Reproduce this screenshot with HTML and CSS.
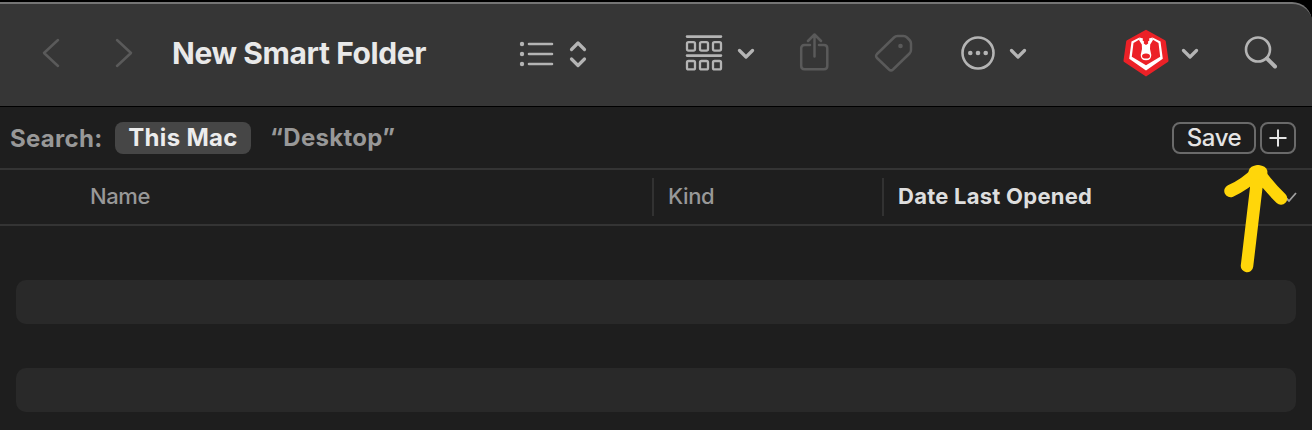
FILE: index.html
```
<!DOCTYPE html>
<html lang="en">
<head>
    <meta charset="UTF-8">
    <meta name="viewport" content="width=device-width, initial-scale=1.0">
    <title>New Smart Folder</title>
    <link rel="stylesheet" href="styles.css">
</head>
<body>
    <div class="window">
        <!-- Toolbar -->
        <div class="toolbar">
            <svg class="icon dim back" width="20" height="32" viewBox="0 0 20 32">
                <path d="M17 3L3 16L17 29"/>
            </svg>
            <svg class="icon dim forward" width="20" height="32" viewBox="0 0 20 32">
                <path d="M3 3L17 16L3 29"/>
            </svg>
            <h1 class="title">New Smart Folder</h1>

            <svg class="icon view" width="68" height="32" viewBox="0 0 68 32">
                <path d="M10 7H33M10 17H33M10 27H33"/>
                <g class="fill">
                    <circle cx="3" cy="7" r="2.2"/>
                    <circle cx="3" cy="17" r="2.2"/>
                    <circle cx="3" cy="27" r="2.2"/>
                </g>
                <path class="thick" d="M52.5 12.5L59 6L65.5 12.5M52.5 22L59 28.5L65.5 22"/>
            </svg>

            <svg class="icon group" width="38" height="38" viewBox="0 0 38 38">
                <path d="M2 2.6H36M2 21.6H36"/>
                <g class="cells">
                    <rect x="2" y="8.2" width="8" height="8.4" rx="1.5"/>
                    <rect x="15" y="8.2" width="8" height="8.4" rx="1.5"/>
                    <rect x="28" y="8.2" width="8" height="8.4" rx="1.5"/>
                    <rect x="2" y="27" width="8" height="8.4" rx="1.5"/>
                    <rect x="15" y="27" width="8" height="8.4" rx="1.5"/>
                    <rect x="28" y="27" width="8" height="8.4" rx="1.5"/>
                </g>
            </svg>
            <svg class="icon chevron" width="18" height="12" viewBox="0 0 18 12">
                <path class="thick" d="M2.5 3.5L9 10L15.5 3.5"/>
            </svg>

            <svg class="icon dim share" width="32" height="40" viewBox="0 0 32 40">
                <path d="M11 12H5.5Q2.2 12 2.2 15.3V33Q2.2 36.2 5.5 36.2H25Q28.3 36.2 28.3 33V15.3Q28.3 12 25 12H20"/>
                <path d="M15.5 23.5V2M9 8L15.5 1.5L22 8"/>
            </svg>
            <svg class="icon dim tag" width="40" height="40" viewBox="0 0 40 40">
                <path d="M20 4.5Q21.5 3 23.5 3H29.5Q31.5 3 33 4.5L35.5 7Q37 8.5 37 10.5V17Q37 19 35.5 20.5L19 36.5Q17 38.3 15 36.5L3 25Q1.2 23 3 21Z"/>
                <circle class="dot" cx="26.5" cy="13" r="2.3"/>
            </svg>

            <svg class="icon more" width="36" height="36" viewBox="0 0 36 36">
                <circle cx="18" cy="18" r="15.5"/>
                <g class="fill">
                    <circle cx="10.3" cy="18" r="2.3"/>
                    <circle cx="18" cy="18" r="2.3"/>
                    <circle cx="25.7" cy="18" r="2.3"/>
                </g>
            </svg>
            <svg class="icon chevron" width="18" height="12" viewBox="0 0 18 12">
                <path class="thick" d="M2.5 3.5L9 10L15.5 3.5"/>
            </svg>

            <svg class="bear" width="46" height="48" viewBox="0 0 46 48">
                <path class="badge" d="M23 0.7L42 11.2Q42.7 11.7 42.8 12.5L45.5 31.5Q45.6 32.5 44.8 33L23 47.5L1.2 33Q0.4 32.5 0.5 31.5L3.2 12.5Q3.3 11.7 4 11.2Z"/>
                <path class="face" d="M16.5 8.5L8.5 12.5L6.2 29.8L23 41.5L39.8 29.8L37.5 12.5L29.5 8.5L30 10.8L35.5 14L37.2 27.8L23 36.3L8.8 27.8L10.5 14L16 10.8Z"/>
                <path class="head" d="M16.5 8.5L20 9.5L19.6 11.5L21 12.5L20.8 14.500L23 16L25.2 14.5L25 12.5L26.4 11.5L26 9.5L29.5 8.5L30 11L27.2 15.5L27 20L28.300 26Q28.300 31.3 23 31.3Q17.700 31.3 17.700 26L19 20L18.800 15.500L16 11Z"/>
                <ellipse class="nose" cx="23" cy="27" rx="4" ry="2.6"/>
            </svg>
            <svg class="icon chevron" width="18" height="12" viewBox="0 0 18 12">
                <path class="thick" d="M2.5 3.5L9 10L15.5 3.5"/>
            </svg>

            <svg class="icon search" width="36" height="36" viewBox="0 0 36 36">
                <circle cx="15" cy="14.5" r="12"/>
                <path class="handle" d="M24 23.5L32 31.5"/>
            </svg>
        </div>

        <!-- Search scope -->
        <div class="scope">
            <span class="label">Search:</span>
            <span class="location active">This Mac</span>
            <span class="location">“Desktop”</span>
            <button class="save">Save</button>
            <button class="add" aria-label="Add">
                <svg width="18" height="18" viewBox="0 0 18 18">
                    <path d="M9 0.5V17.5M0.5 9H17.5"/>
                </svg>
            </button>
        </div>

        <!-- Column headers -->
        <div class="columns">
            <div class="column name">Name</div>
            <div class="column kind">Kind</div>
            <div class="column date">
                Date Last Opened
                <svg class="sort" width="16" height="12" viewBox="0 0 16 12">
                    <path d="M2 5L7 10L14 2"/>
                </svg>
            </div>
        </div>

        <!-- Empty file list -->
        <div class="list">
            <div class="row"></div>
            <div class="row striped"></div>
            <div class="row"></div>
            <div class="row striped"></div>
        </div>

        <svg class="arrow" width="72" height="112" viewBox="0 0 72 112">
            <path d="M27 105L38 12M10.5 30Q26 23 38 10.5Q48 25 61 37.5"/>
            <path class="tip" d="M35.5 11.5L38 11L40.5 11.5"/>
        </svg>
    </div>
</body>
</html>
```
FILE: styles.css
```
* {
    box-sizing: border-box;
}

body {
    margin: 0;
    background-color: #000;
    font-family: Inter, "Liberation Sans", sans-serif;
}

.window {
    position: relative;
    height: 430px;
    padding-top: 2px;
    overflow: hidden;
}

.toolbar {
    display: flex;
    align-items: center;
    height: 104px;
    padding: 0 0 4px 41px;
    background-color: #363636;
    border-top: 2px solid #757575;
    border-top-right-radius: 20px;
}

.toolbar svg {
    flex-shrink: 0;
}

.icon {
    fill: none;
    stroke: #b4b4b4;
    stroke-width: 2.6;
    stroke-linecap: round;
    stroke-linejoin: round;
}

.icon .fill {
    fill: #b4b4b4;
    stroke: none;
}

.icon .thick {
    stroke-width: 3.2;
}

.icon .cells {
    stroke-width: 2.3;
}

.icon .handle {
    stroke-width: 4;
}

.dim {
    stroke: #5a5a5a;
    stroke-width: 2.5;
}

.dim .dot {
    fill: #5a5a5a;
    stroke: none;
}

.forward {
    margin-left: 53px;
}

.title {
    width: 347px;
    margin: 0 0 0 38px;
    color: #e9e9e9;
    font-size: 30px;
    font-weight: 650;
    letter-spacing: -0.4px;
    white-space: nowrap;
}

.group {
    margin-left: 98px;
}

.chevron {
    margin-left: 14px;
}

.share {
    margin-left: 44px;
}

.tag {
    margin-left: 43px;
}

.more {
    margin-left: 46px;
}

.more + .chevron {
    margin-left: 13px;
}

.bear {
    margin-left: 96px;
}

.bear + .chevron {
    margin-left: 12px;
}

.badge {
    fill: #ec2127;
}

.face,
.head {
    fill: #fff;
}

.nose {
    fill: #ec2127;
}

.search {
    margin-left: 44px;
}

.scope {
    display: flex;
    align-items: center;
    height: 64px;
    padding: 0 16px 0 10px;
    background-color: #1e1e1e;
    border-top: 1px solid #000;
    border-bottom: 2px solid #343434;
    color: #989898;
    font-size: 24px;
    font-weight: 700;
    letter-spacing: 0.3px;
}

.label {
    width: 105px;
    padding-top: 2px;
}

.location {
    height: 32px;
    line-height: 31px;
}

.location.active {
    width: 136px;
    margin-right: 19px;
    background-color: #464646;
    border-radius: 8px;
    color: #ececec;
    text-align: center;
}

.save,
.add {
    display: flex;
    align-items: center;
    justify-content: center;
    height: 32px;
    padding: 0;
    background: none;
    border: 2px solid #6a6a6a;
    border-radius: 8px;
    color: #e4e4e4;
    font-family: inherit;
    font-size: 24px;
    font-weight: 450;
    letter-spacing: -0.4px;
}

.save {
    width: 84px;
    margin-left: auto;
}

.add {
    width: 36px;
    margin-left: 4px;
}

.add path {
    stroke: #e4e4e4;
    stroke-width: 2;
}

.columns {
    display: flex;
    align-items: center;
    height: 56px;
    background-color: #1e1e1e;
    border-bottom: 2px solid #343434;
    color: #989898;
    font-size: 22px;
    font-weight: 450;
    letter-spacing: -0.4px;
}

.column {
    height: 38px;
    line-height: 36px;
}

.name {
    width: 652px;
    padding-left: 90px;
}

.kind {
    width: 230px;
    padding-left: 14px;
    border-left: 2px solid #323232;
}

.date {
    display: flex;
    flex: 1;
    align-items: center;
    justify-content: space-between;
    padding: 0 14px 2px;
    border-left: 2px solid #323232;
    color: #dedede;
    font-weight: 650;
    letter-spacing: 0.25px;
}

.sort {
    margin-top: 2px;
    fill: none;
    stroke: #a0a0a0;
    stroke-width: 1.8;
}

.list {
    height: 204px;
    padding: 10px 16px;
    background-color: #1e1e1e;
}

.row {
    height: 44px;
    border-radius: 10px;
}

.row.striped {
    background-color: #292929;
}

/* arrow pointing at the add button */
.arrow {
    position: absolute;
    top: 161px;
    left: 1220px;
    fill: none;
    stroke: #ffd60a;
    stroke-width: 12.5;
    stroke-linecap: round;
    stroke-linejoin: round;
}

.arrow .tip {
    stroke-width: 14;
}
```
